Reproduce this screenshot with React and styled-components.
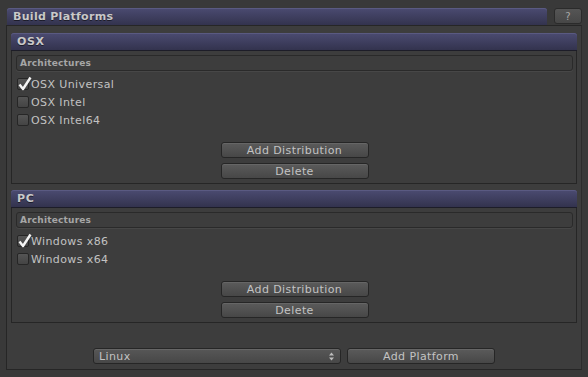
import React from "react";
import styled, { createGlobalStyle } from "styled-components";

const COLORS = {
  page: "#393939",
  panel: "#3d3d3d",
  border: "#262626",
  headerTop: "#4b4b71",
  headerBottom: "#33334e",
  headerText: "#c9c9c9",
  text: "#c2c2c2",
  buttonTop: "#5b5b5b",
  buttonBottom: "#474747",
};

const GlobalStyle = createGlobalStyle`
  html, body {
    margin: 0;
    padding: 0;
    background: ${COLORS.page};
    font-family: "DejaVu Sans", Verdana, sans-serif;
    font-size: 11px;
    color: ${COLORS.text};
  }
  * { box-sizing: border-box; }
`;

const Page = styled.div`
  width: 588px;
  height: 377px;
  padding: 8px 6px 0 6px;
`;

const TopRow = styled.div`
  display: flex;
  align-items: flex-start;
  padding-left: 1px;
  gap: 7px;
`;

const TitleBar = styled.div`
  flex: 0 0 540px;
  height: 17px;
  padding-left: 6px;
  display: flex;
  align-items: center;
  font-weight: bold;
  color: ${COLORS.headerText};
  text-shadow: 0 1px 0 #1c1c2a;
  letter-spacing: 0.3px;
  background: linear-gradient(${COLORS.headerTop}, ${COLORS.headerBottom});
  border-radius: 3px 3px 0 0;
  box-shadow: inset 0 1px 0 #5a5a82;
`;

const HelpButton = styled.div`
  flex: 0 0 28px;
  height: 16px;
  display: flex;
  align-items: center;
  justify-content: center;
  font-size: 10px;
  color: #a8a8a8;
  background: linear-gradient(#555, #474747);
  border: 1px solid #2b2b2b;
  border-radius: 3px;
`;

const Panel = styled.div`
  height: 345px;
  background: ${COLORS.panel};
  border: 1px solid ${COLORS.border};
  border-right-color: #2c2c2c;
  padding: 7px 4px 0 4px;
  display: flex;
  flex-direction: column;
  gap: 6px;
`;

const Section = styled.div`
  border: 1px solid ${COLORS.border};
  border-top: none;
  border-radius: 3px 3px 0 0;
  display: flex;
  flex-direction: column;
`;

const SectionHeader = styled.div`
  height: 18px;
  padding-left: 6px;
  display: flex;
  align-items: center;
  font-weight: bold;
  color: ${COLORS.headerText};
  letter-spacing: 0.6px;
  text-shadow: 0 1px 0 #1c1c2a;
  background: linear-gradient(${COLORS.headerTop}, ${COLORS.headerBottom});
  border-radius: 3px 3px 0 0;
  box-shadow: inset 0 1px 0 #5a5a82;
  border-bottom: 1px solid #1d1d28;
  margin: 0 -1px;
`;

const SectionBody = styled.div`
  padding: 4px 3px 4px 4px;
  display: flex;
  flex-direction: column;
`;

const GroupLabel = styled.div`
  height: 16px;
  padding-left: 3px;
  display: flex;
  align-items: center;
  font-size: 9px;
  font-weight: bold;
  letter-spacing: 0.2px;
  color: #a6a6a6;
  border: 1px solid #2a2a2a;
  border-radius: 3px;
  box-shadow: 0 1px 0 #474747;
  margin-bottom: 4px;
`;

const CheckRow = styled.label`
  height: 18px;
  display: flex;
  align-items: center;
  gap: 2px;
  padding-left: 1px;
  letter-spacing: 0.4px;
  color: ${COLORS.text};
`;

const Box = styled.span`
  width: 12px;
  height: 12px;
  position: relative;
  border-radius: 2px;
  border: 1px solid #262626;
  background: linear-gradient(#555, #444);
`;

const Tick = styled.svg`
  position: absolute;
  left: 0;
  top: -3px;
  overflow: visible;
`;

const ButtonStack = styled.div`
  margin-top: 13px;
  display: flex;
  flex-direction: column;
  align-items: center;
  gap: 5px;
`;

const Button = styled.div`
  width: 148px;
  height: 16px;
  display: flex;
  align-items: center;
  justify-content: center;
  letter-spacing: 0.4px;
  color: #c3c3c3;
  background: linear-gradient(${COLORS.buttonTop}, ${COLORS.buttonBottom});
  border: 1px solid #262626;
  border-radius: 3px;
  box-shadow: inset 0 1px 0 #666;
`;

const BottomRow = styled.div`
  margin-top: auto;
  margin-bottom: 5px;
  display: flex;
  justify-content: center;
  gap: 6px;
`;

const Dropdown = styled.div`
  width: 248px;
  height: 16px;
  padding: 0 6px 0 5px;
  display: flex;
  align-items: center;
  justify-content: space-between;
  letter-spacing: 0.4px;
  color: #c3c3c3;
  background: linear-gradient(#575757, #474747);
  border: 1px solid #262626;
  border-radius: 3px;
  box-shadow: inset 0 1px 0 #666;
`;

const Checkbox = ({ checked, label }) => (
  <CheckRow>
    <Box>
      {checked && (
        <Tick width="14" height="15" viewBox="0 0 14 15">
          <path
            d="M1.5 8.5 L5 13 L12.5 1.5"
            fill="none"
            stroke="#f4f4f4"
            strokeWidth="2.4"
            strokeLinejoin="round"
          />
        </Tick>
      )}
    </Box>
    {label}
  </CheckRow>
);

const PlatformSection = ({ name, archs }) => (
  <Section>
    <SectionHeader>{name}</SectionHeader>
    <SectionBody>
      <GroupLabel>Architectures</GroupLabel>
      {archs.map((a) => (
        <Checkbox key={a.label} checked={a.checked} label={a.label} />
      ))}
      <ButtonStack>
        <Button>Add Distribution</Button>
        <Button>Delete</Button>
      </ButtonStack>
    </SectionBody>
  </Section>
);

export default function App() {
  return (
    <>
      <GlobalStyle />
      <Page>
        <TopRow>
          <TitleBar>Build Platforms</TitleBar>
          <HelpButton>?</HelpButton>
        </TopRow>
        <Panel>
          <PlatformSection
            name="OSX"
            archs={[
              { label: "OSX Universal", checked: true },
              { label: "OSX Intel" },
              { label: "OSX Intel64" },
            ]}
          />
          <PlatformSection
            name="PC"
            archs={[
              { label: "Windows x86", checked: true },
              { label: "Windows x64" },
            ]}
          />
          <BottomRow>
            <Dropdown>
              <span>Linux</span>
              <svg width="5" height="9" viewBox="0 0 5 9">
                <path d="M0 3.5 L2.5 0.5 L5 3.5 Z M0 5.5 L2.5 8.5 L5 5.5 Z" fill="#bdbdbd" />
              </svg>
            </Dropdown>
            <Button>Add Platform</Button>
          </BottomRow>
        </Panel>
      </Page>
    </>
  );
}
